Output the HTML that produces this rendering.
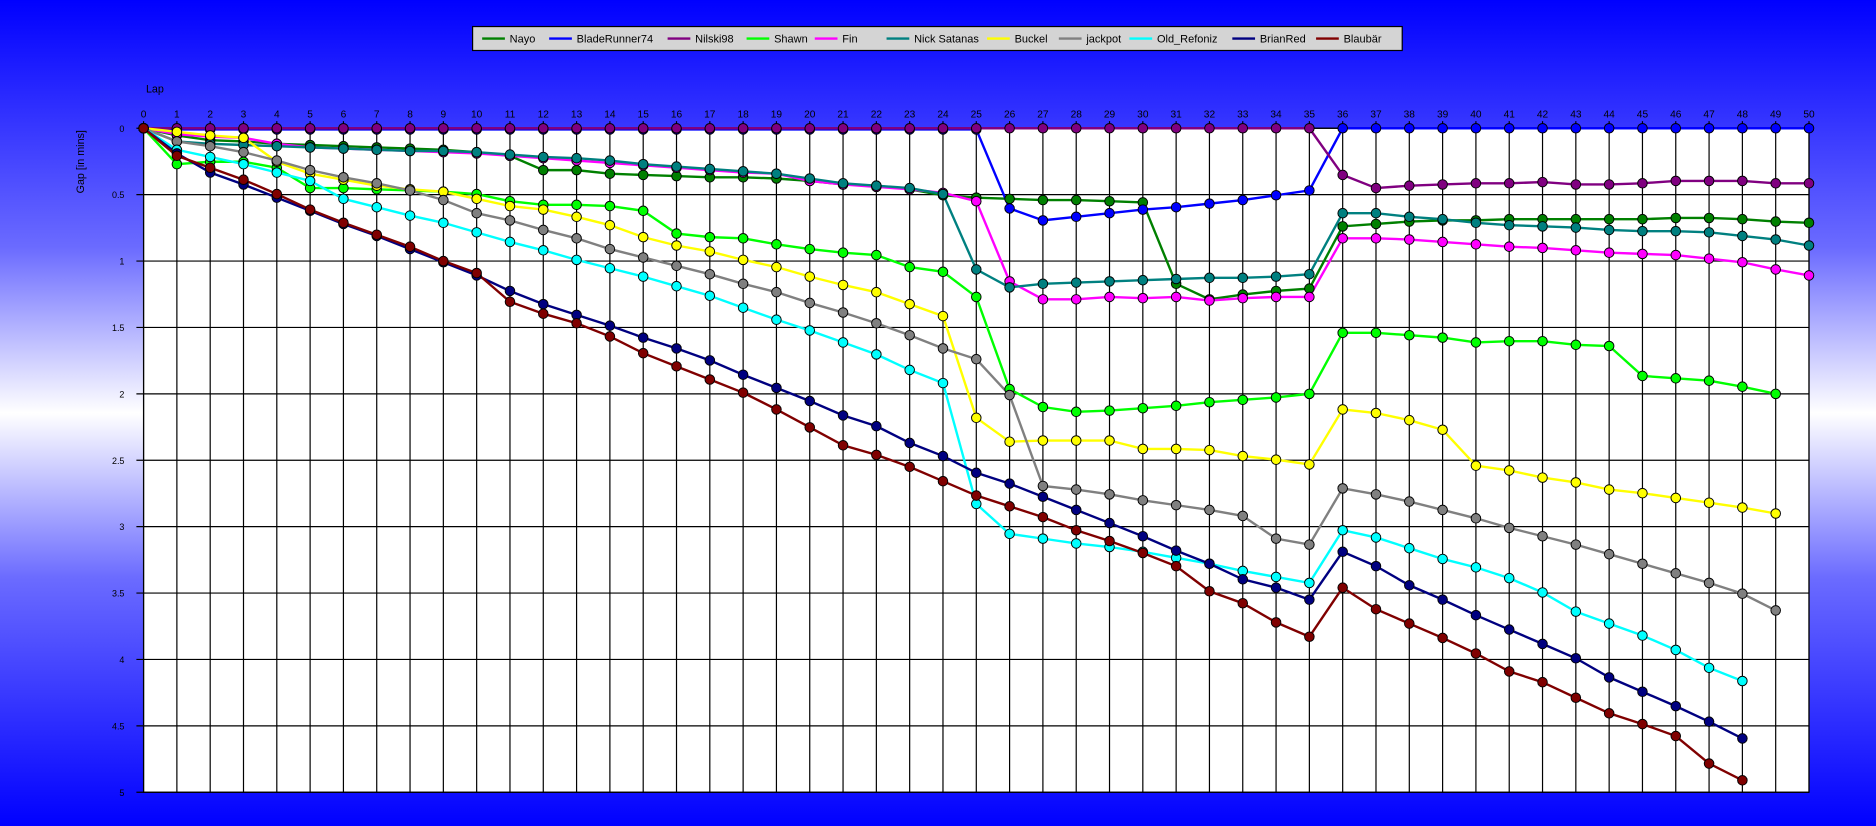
<!DOCTYPE html>
<html><head><meta charset="utf-8"><style>
html,body{margin:0;padding:0;width:1876px;height:826px;overflow:hidden}
body{background:linear-gradient(to bottom,#0000ff 0%,#6b6bff 30%,#ffffff 50%,#6b6bff 70%,#0000ff 100%)}
svg{display:block}
text{font-family:"Liberation Sans",sans-serif}
</style></head><body>
<svg id="s" width="1876" height="826" viewBox="0 0 1568 690" xmlns="http://www.w3.org/2000/svg">
<rect x="120" y="107" width="1392" height="555" fill="#fff"/>
<g id="grid"></g>
<g id="lines"></g>
<g id="legend">
<rect x="395" y="22" width="777" height="20" fill="#d4d4d4" stroke="#000" stroke-width="1"/>
</g>
<text x="122" y="77" font-size="9">Lap</text>
<text transform="translate(70,135) rotate(-90)" font-size="9" text-anchor="middle">Gap [in mins]</text>
</svg>
<script>
var NS="http://www.w3.org/2000/svg";
function el(t,a,p,txt){var e=document.createElementNS(NS,t);for(var k in a)e.setAttribute(k,a[k]);if(txt!=null)e.textContent=txt;p.appendChild(e);return e;}
var g=document.getElementById('grid'),L=document.getElementById('lines'),lg=document.getElementById('legend');
var dx=27.84;
for(var i=0;i<=50;i++){var x=120+dx*i;el('line',{x1:x,y1:101,x2:x,y2:662,stroke:'#000','stroke-width':1},g);el('text',{x:x,y:98,'font-size':8.5,'text-anchor':'middle'},g,i);}
for(var j=0;j<=10;j++){var y=107+55.5*j;el('line',{x1:114,y1:y,x2:1512,y2:y,stroke:'#000','stroke-width':1},g);var v=j/2;el('text',{x:104,y:y+3,'font-size':7.5,'text-anchor':'end'},g,(v==Math.floor(v)?v:v.toFixed(1)));}
el('rect',{x:120,y:107,width:1392,height:555,fill:'none',stroke:'#000','stroke-width':1},g);
var S=[
['Nayo','#008000',[107,113,117,118,120,121,122,123,124,125,127,130,142,142,145,146,147,148,148,149,151,154,155,158,163,165,166,167,167,168,169,237,250,246,243,241,189,187,185,184,184,183,183,183,183,183,182,182,183,185,186]],
['BladeRunner74','#0000ff',[107,108,108,108,108,108,108,108,108,108,108,108,108,108,108,108,108,108,108,108,108,108,108,108,108,108,174,184,181,178,175,173,170,167,163,159,107,107,107,107,107,107,107,107,107,107,107,107,107,107,107]],
['Nilski98','#800080',[107,107,107,107,107,107,107,107,107,107,107,107,107,107,107,107,107,107,107,107,107,107,107,107,107,107,107,107,107,107,107,107,107,107,107,107,146,157,155,154,153,153,152,154,154,153,151,151,151,153,153]],
['Shawn','#00ff00',[107,137,135,135,140,157,157,158,159,160,162,168,171,171,172,176,195,198,199,204,208,211,213,223,227,248,325,340,344,343,341,339,336,334,332,329,278,278,280,282,286,285,285,288,289,314,316,318,323,329]],
['Fin','#ff00ff',[107,112,114,115,120,123,124,125,126,127,128,130,132,134,136,138,140,142,144,145,151,154,156,158,161,168,235,250,250,248,249,248,251,249,248,248,199,199,200,202,204,206,207,209,211,212,213,216,219,225,230]],
['Nick Satanas','#008080',[107,118,120,121,122,123,124,125,126,126,127,129,131,132,134,137,139,141,143,145,149,153,155,157,162,225,240,237,236,235,234,233,232,232,231,229,178,178,181,183,186,188,189,190,192,193,193,194,197,200,205]],
['Buckel','#ffff00',[107,110,113,115,135,145,150,155,158,160,166,172,175,181,188,198,205,210,217,223,231,238,244,254,264,349,369,368,368,368,375,375,376,381,384,388,342,345,351,359,389,393,399,403,409,412,416,420,424,429]],
['jackpot','#808080',[107,118,122,127,134,142,148,153,159,167,178,184,192,199,208,215,222,229,237,244,253,261,270,280,291,300,330,406,409,413,418,422,426,431,450,455,408,413,419,426,433,441,448,455,463,471,479,487,496,510]],
['Old_Refoniz','#00ffff',[107,125,131,137,144,151,166,173,180,186,194,202,209,217,224,231,239,247,257,267,276,286,296,309,320,421,446,450,454,457,461,466,471,477,482,487,443,449,458,467,474,483,495,511,521,531,543,558,569]],
['BrianRed','#000080',[107,128,144,154,165,176,187,197,208,219,230,243,254,263,272,282,291,301,313,324,335,347,356,370,381,395,404,415,426,437,448,460,471,484,491,501,461,473,489,501,514,526,538,550,566,578,590,603,617]],
['Blaubär','#800000',[107,130,140,150,162,175,186,196,206,218,228,252,262,270,281,295,306,317,328,342,357,372,380,390,402,414,423,432,443,452,462,473,494,504,520,532,491,509,521,533,546,561,570,583,596,605,615,638,652]]
];
var lx=[403,459,558,624,681,741,825,885,944,1030,1100];
S.forEach(function(s,k){
  var pts=s[2].map(function(y,i){return (120+dx*i).toFixed(1)+','+y;}).join(' ');
  el('polyline',{points:pts,fill:'none',stroke:s[1],'stroke-width':2},L);
  el('line',{x1:lx[k],y1:32,x2:lx[k]+19,y2:32,stroke:s[1],'stroke-width':2},lg);
  el('text',{x:lx[k]+23,y:35.5,'font-size':9.2,fill:'#000'},lg,s[0]);
});
S.forEach(function(s){
  s[2].forEach(function(y,i){el('circle',{cx:120+dx*i,cy:y,r:4,fill:s[1],stroke:'#000','stroke-width':0.8},L);});
});
</script>
</body></html>
